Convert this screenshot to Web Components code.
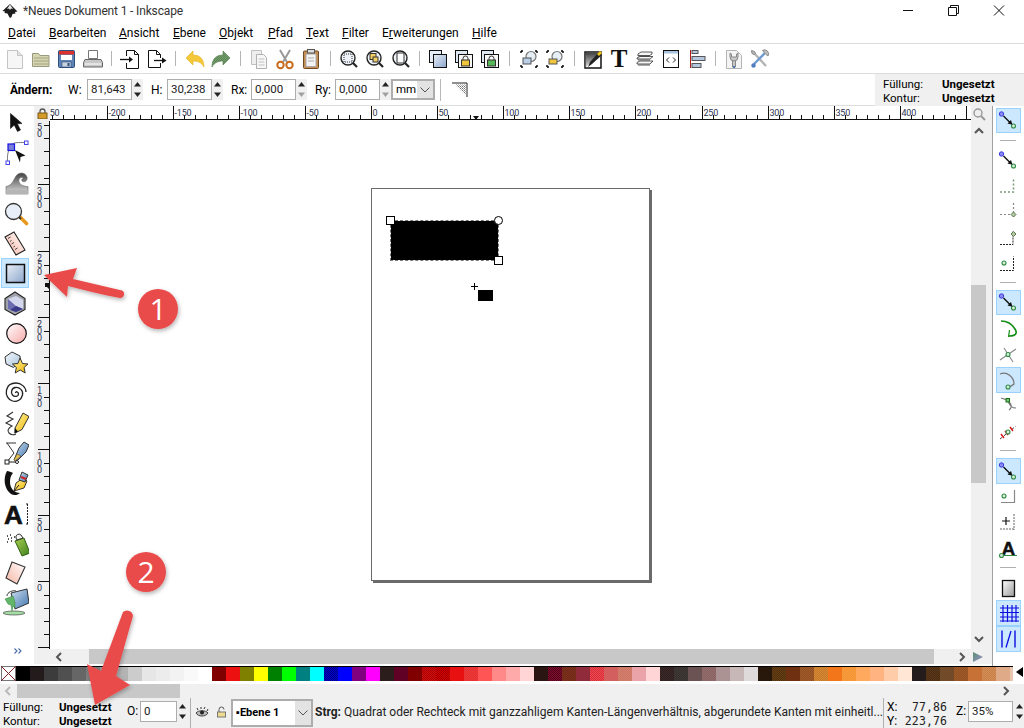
<!DOCTYPE html>
<html lang="de"><head><meta charset="utf-8"><title>Inkscape</title>
<style>html,body{margin:0;padding:0;background:#fff}</style></head>
<body>
<ink-app>
  <ink-titlebar slot="title">*Neues Dokument 1 - Inkscape</ink-titlebar>
  <ink-menubar slot="menu"></ink-menubar>
  <ink-commandbar slot="commands"></ink-commandbar>
  <ink-controlbar slot="controls"></ink-controlbar>
  <ink-workspace slot="work"></ink-workspace>
  <ink-palette slot="palette"></ink-palette>
  <ink-palettescroll slot="pscroll"></ink-palettescroll>
  <ink-statusbar slot="status"></ink-statusbar>
  <ink-annotations slot="notes"></ink-annotations>
</ink-app>
<script>
const FONT='Roboto,"Noto Sans",sans-serif';
const DEFS=`<defs>
<linearGradient id="gb" x1="0" y1="0" x2="1" y2="1"><stop offset="0" stop-color="#eaeff5"/><stop offset="1" stop-color="#8ba6cd"/></linearGradient>
<linearGradient id="gr" x1="0" y1="0" x2="1" y2="1"><stop offset="0" stop-color="#fff"/><stop offset="1" stop-color="#f7a8a8"/></linearGradient>
<linearGradient id="gp" x1="1" y1="0" x2="0" y2="1"><stop offset="0" stop-color="#fff"/><stop offset="1" stop-color="#f6b5a4"/></linearGradient>
<linearGradient id="gy" x1="0" y1="0" x2="1" y2="1"><stop offset="0" stop-color="#fff3a0"/><stop offset="1" stop-color="#eeb400"/></linearGradient>
<linearGradient id="gg" x1="0" y1="0" x2="0" y2="1"><stop offset="0" stop-color="#444"/><stop offset="1" stop-color="#ddd"/></linearGradient>
<linearGradient id="gw" x1="0" y1="0" x2="1" y2="1"><stop offset="0" stop-color="#fff"/><stop offset="1" stop-color="#999"/></linearGradient>
<linearGradient id="gl" x1="0" y1="0" x2="1" y2="1"><stop offset="0" stop-color="#f4f8fc"/><stop offset="1" stop-color="#a9c3dd"/></linearGradient>
<linearGradient id="gv" x1="0" y1="0" x2="1" y2="1"><stop offset="0" stop-color="#a7cf50"/><stop offset="1" stop-color="#3f7f1c"/></linearGradient>
<linearGradient id="gq" x1="0" y1="0" x2="1" y2="1"><stop offset="0" stop-color="#cfe0f0"/><stop offset="1" stop-color="#3f73ad"/></linearGradient>
<pattern id="dots" width="2" height="2" patternUnits="userSpaceOnUse"><rect width="1" height="1" fill="#444"/><rect x="1" y="1" width="1" height="1" fill="#444"/></pattern>
</defs>`;
const lens=(c='#eef3f9')=>`<circle cx="11" cy="11" r="7" fill="${c}" stroke="#222" stroke-width="1.4"/><path d="M16 16l4 4" stroke="#222" stroke-width="2.2"/>`;
const corners=`<path d="M4 4h2M4 4v2M20 4h-2M20 4v2M4 20h2M4 20v-2M20 20h-2M20 20v-2" stroke="#000" stroke-width="1.4" fill="none"/>`;
const lockI=(x,y,c)=>`<g transform="translate(${x} ${y})"><path d="M2 4V2.500a2.500 2.500 0 015 0V4" fill="none" stroke="#333"/><rect x=".5" y="4" width="8" height="6" fill="${c}" stroke="#333"/></g>`;
const CMD={
 new:`<path d="M4.500 3.500h10l5 5v13h-15z" fill="#f6f6f6" stroke="#c4c4c4"/><path d="M14.500 3.500v5h5" fill="#e2e2e2" stroke="#c4c4c4"/>`,
 open:`<path d="M3.500 6.500h6l1.500 2h9v11h-16.500z" fill="#d5d5b0" stroke="#9a9a80"/><path d="M5 11h15M5 14h15M5 17h15" stroke="#a4a484"/>`,
 save:`<rect x="3.500" y="3.500" width="16" height="17" rx="1" fill="#5f83b5" stroke="#2f4f7d"/><rect x="4" y="4" width="15" height="3.500" fill="#d9322e"/><rect x="6" y="8" width="11" height="5" fill="#fff"/><rect x="7" y="15" width="9" height="5" fill="#c9d3dd" stroke="#2f4f7d" stroke-width=".6"/><rect x="12.500" y="16" width="2" height="3" fill="#2f4f7d"/>`,
 print:`<path d="M7.500 3.500h9v8h-9z" fill="#fff" stroke="#777"/><path d="M4 12.500h16l1.500 3v4.500h-19v-4.500z" fill="#c8c8c8" stroke="#666"/><path d="M4 17h16" stroke="#fff"/>`,
 import:`<path d="M8.500 9V3.500h8l4 4v14h-12V16" fill="#fff" stroke="#111"/><path d="M16.500 3.500v4h4" fill="none" stroke="#111"/><path d="M2 12.500h10" stroke="#111" stroke-width="1.300"/><path d="M11 9.500l4 3-4 3z" fill="#111"/>`,
 export:`<path d="M16.500 11V7.500l-4-4h-8v17h12V16" fill="#fff" stroke="#111"/><path d="M12.500 3.500v4h4" fill="none" stroke="#111"/><path d="M10 13.500h9" stroke="#111" stroke-width="1.300"/><path d="M18 10.500l4.500 3-4.500 3z" fill="#111"/>`,
 undo:`<path d="M3 11l7-7v4c6 0 11 3 11 12-2-4-6-6-11-6v4z" fill="#f5c83a" stroke="#e4b020" stroke-width=".6"/>`,
 redo:`<path d="M21 11l-7-7v4c-6 0-11 3-11 12 2-4 6-6 11-6v4z" fill="#6fa066" stroke="#55804c" stroke-width=".6"/><path d="M21 11l-7-7v4c-6 0-11 3-11 12 2-4 6-6 11-6v4z" fill="url(#dots)" opacity=".3"/>`,
 dup:`<path d="M4.500 3.500h10v14h-10z" fill="#eee" stroke="#c0c0c0"/><path d="M9.500 7.500h7l3 3v11h-10z" fill="#f7f7f7" stroke="#b0b0b0"/><path d="M11.500 12h6M11.500 15h6M11.500 18h6" stroke="#c0c0c0"/>`,
 cut:`<path d="M7 3l7 12M17 3l-7 12" stroke="#9a9a9a" stroke-width="2"/><circle cx="7.500" cy="18" r="3.200" fill="none" stroke="#c76a1c" stroke-width="2"/><circle cx="16.500" cy="18" r="3.200" fill="none" stroke="#c76a1c" stroke-width="2"/>`,
 paste:`<rect x="4.500" y="4" width="15" height="17.500" rx="1" fill="#c68e52" stroke="#6d4a25"/><path d="M7 7h10v12.500h-10z" fill="#f4f4f4" stroke="#aaa"/><rect x="8.500" y="2.500" width="7" height="3.500" fill="#ddd" stroke="#555"/><path d="M9 11h6M9 14h6" stroke="#aaa"/>`,
 zsel:lens()+`<rect x="7" y="7" width="8" height="8" fill="none" stroke="#333" stroke-dasharray="1 1"/>`,
 zdraw:lens()+`<rect x="7" y="6.500" width="6" height="6" fill="#f1cf62" stroke="#333"/><rect x="10" y="10" width="5" height="5" fill="#f1cf62" stroke="#333"/>`,
 zpage:lens()+`<rect x="8" y="6" width="7" height="10" fill="#fff" stroke="#333"/>`,
 clone:`<rect x="3.500" y="3.500" width="12" height="12" fill="#e8eef6" stroke="#111"/><rect x="7.500" y="7.500" width="13" height="13" fill="url(#gb)" stroke="#111"/>`,
 lock:`<rect x="3.500" y="3.500" width="12" height="12" fill="#dfe8f2" stroke="#111"/><rect x="6.500" y="7.500" width="14" height="13" fill="#f7f7f7" stroke="#111"/>`+lockI(9,9,'#efc63c'),
 unlock:`<rect x="3.500" y="3.500" width="12" height="12" fill="#dfe8f2" stroke="#111"/><rect x="6.500" y="7.500" width="14" height="13" fill="#f7f7f7" stroke="#111"/>`+lockI(9,9,'#58b858'),
 zoomobj:corners+`<circle cx="14" cy="9.500" r="5" fill="#e6eef6" stroke="#777" stroke-width="1.200"/><rect x="6" y="11" width="8" height="6" fill="#b9cfe8" stroke="#555"/>`,
 zoomlock:corners+`<circle cx="14" cy="9.500" r="5" fill="#e6eef6" stroke="#777" stroke-width="1.200"/><rect x="6" y="12" width="8" height="5" fill="#efc63c" stroke="#555"/>`,
 fill:`<path d="M4 5h16v16H4z" fill="#fff" stroke="#111" stroke-width="1.500"/><path d="M4.800 20.500V6h14z" fill="url(#gg)"/><path d="M7 20l2-5L18 5l3 3-10 9z" fill="#222"/><path d="M16 7l3-3 2 2-3 3z" fill="#f5c518"/>`,
 xmled:`<rect x="4.500" y="3.500" width="15" height="17" fill="#fff" stroke="#111"/><rect x="5" y="4" width="14" height="2.500" fill="#a9c3dd"/><path d="M10 10.500L7.500 13l2.500 2.500M14 10.500l2.500 2.500-2.500 2.500" fill="none" stroke="#222"/>`,
 layers:`<path d="M5 7l3-2h11v2l-3 2H5zM4 11l3-1.500h13l-3 2.500H4zM4 15.500l3-1.500h13l-3 3H4z" fill="#f6f6f6" stroke="#333" stroke-width=".8"/><path d="M5 8.500h12M5 13h12M5 18h12" stroke="#555"/>`,
 align:`<path d="M5.500 3v18" stroke="#b41e1e"/><rect x="7" y="3.500" width="6" height="3" fill="#b3c8e0" stroke="#555"/><rect x="7" y="9.500" width="13" height="4" fill="#b3c8e0" stroke="#555"/><rect x="7" y="16.500" width="9" height="4" fill="#b3c8e0" stroke="#555"/>`,
 docprops:`<path d="M4.500 3.500h10l5 5v13h-15z" fill="#f4f4f4" stroke="#b4b4b4"/><path d="M8 6v4a4 4 0 008 0V6l-1.500 1v3h-5V7zM10.500 14v6h3v-6" fill="#c8c8c8" stroke="#888"/><path d="M11 19h2v2h-2z" fill="#4a78b8"/>`,
 prefs:`<path d="M6 6l12 13" stroke="#b4b4b4" stroke-width="2.400"/><path d="M18 5L6 17" stroke="#6f9bd0" stroke-width="2.400"/><circle cx="5.500" cy="18.500" r="2.200" fill="#4f7fc0"/><path d="M14.500 3.500a4 4 0 015.500 5.500l-2.500-2z" fill="#c0c0c0" stroke="#888"/><path d="M3.500 3.500l3 1 1 2-1.500 1-2-1z" fill="#bbb" stroke="#888"/>`
};
const TOOLS={
 select:`<path d="M9.500 4.500v15l3.800-3.500 3.200 6.500 3-1.500-3.200-6.200 4.700-.3z" fill="#111" stroke="#111" stroke-width=".6"/>`,
 node:`<path d="M10 6C13 3 18 3.500 24 3.500M9 10C6 13 6.500 19 6.500 23" fill="none" stroke="#777"/><rect x="7" y="5" width="6.500" height="6.500" fill="#7a7ed8" stroke="#1515e0" stroke-width="1.200"/><rect x="23.500" y="2" width="3.500" height="3.500" fill="#fff" stroke="#4545e6"/><rect x="5" y="22" width="3.500" height="3.500" fill="#fff" stroke="#4545e6"/><path d="M14 11l10.500 5.500-5 1.500-.5 5.500z" fill="#111"/>`,
 tweak:`<path d="M5 17.500C11 17 13 10 15 7c3-4 9-4 11 1 1 4-3 6-5 4-1-2 1-3 2-2-2-3-6-1-5 3 1 3 5 4.500 9 4.500v7.500H5z" fill="url(#gg)" stroke="#666" stroke-width=".6"/><path d="M5 21h22v4H5z" fill="#b5b5b5"/>`,
 zoom:`<path d="M19 18l6.500 6.500" stroke="#e89a20" stroke-width="3.600" stroke-linecap="round"/><circle cx="12.500" cy="12.500" r="8" fill="#e8eff8" stroke="#333" stroke-width="1.300"/><path d="M18 18l2 2" stroke="#333" stroke-width="2"/>`,
 measure:`<path d="M4 8l9-5 11 18-9 5z" fill="url(#gp)" stroke="#222" stroke-width="1.100"/><path d="M7 9.500l2.500-1.500M9 12.500l1.500-1M10.500 15l2.500-1.500M12.500 18l1.500-1M14 20.500l2.500-1.500" stroke="#444"/>`,
 rect:`<rect x="5.500" y="5.500" width="18" height="18" fill="url(#gb)" stroke="#111" stroke-width="1.500"/>`,
 box3d:`<path d="M14 3l10 6.500v11L14 26 4 20.500v-11z" fill="#a0a4aa" stroke="#222" stroke-width="1.100"/><path d="M7 10l8-3 7 4v9l-7 3-8-3z" fill="#d4d8ec"/><path d="M7 20V10l8 7 7 3-7 3z" fill="#6c6cb0"/><path d="M15 17l7 3-7 3-6-2z" fill="#3a3a86"/>`,
 circle:`<circle cx="15.500" cy="14.500" r="9.800" fill="url(#gr)" stroke="#111" stroke-width="1.200"/>`,
 star:`<path d="M11 3l8 4 .5 5-7 6.500L5 15 4 8z" fill="url(#gl)" stroke="#333"/><path d="M19 9l2.500 5.500 5.500.5-4 3.500 1.200 5.500-5-3-5 3 1.200-5.500-4-3.500 5.500-.5z" fill="url(#gy)" stroke="#333"/>`,
 spiral:`<path d="M14.500 14c0-2 3-1.500 3 1s-4 3.500-6 1-1-7 3-7.500 8 3 7 7.500-5.500 7.500-10 6-7-6-6-11S10 4 15 4s10 4 10 9" fill="none" stroke="#222" stroke-width="1.300"/>`,
 pencil:`<path d="M12 3L6 7l6 3-7 4 6 3c-4 2-5 5-3 7s5 2 7 1" fill="none" stroke="#333" stroke-width="1.100"/><path d="M14 19l8-15 6 3.500-7 13-7 3.500z" fill="url(#gy)" stroke="#333"/><path d="M14 19l3 3.500-3.500 2z" fill="#111"/>`,
 pen:`<path d="M5 4h10M6 4l7 10-7 9" fill="none" stroke="#333"/><rect x="4" y="21" width="4" height="4" fill="#fff" stroke="#222"/><path d="M8 23h7" stroke="#222"/><circle cx="16" cy="23" r="1.500" fill="#fff" stroke="#222"/><path d="M13 21l5-12 5-6 5 3-3 7-8 8z" fill="url(#gq)" stroke="#333"/><path d="M13 21l3-6 4 2-6 5z" fill="#eac14b" stroke="#333" stroke-width=".5"/>`,
 calli:`<path d="M6 2C2 9 3 20 10 25c3 2 7 1 9-1-5 0-10-4-10-11 0-4 1-7 3-9-2-1-4-2-6-2z" fill="#111"/><path d="M13 22l2-8 7-5 4 3-3 7z" fill="url(#gy)" stroke="#333"/><path d="M18 11l3-8 6 3-3 7z" fill="url(#gq)" stroke="#333"/><path d="M20 8l5 2" stroke="#c22" stroke-width="2"/><path d="M13 22l5-6" stroke="#222"/>`,
 text:`<text x="3" y="25" font-family="Liberation Sans" font-weight="700" font-size="26" fill="#111" stroke="#111" stroke-width=".6">A</text><path d="M25 5h3M26.500 5v20M25 25h3" stroke="#222" stroke-dasharray="2 1"/>`,
 spray:`<path d="M6 7h1M9 6h1M7 10h1M10 9h1M6 13h1M10 12h1M13 8h1" stroke="#222" stroke-width="1.500"/><path d="M14 12l9-3 6 15-8 3z" fill="url(#gv)" stroke="#2f5f12"/><path d="M15 9a3 3 0 015-3l2 3-6 2z" fill="#f5f5f5" stroke="#333"/>`,
 eraser:`<path d="M11 3l13 5-8 17-11-6z" fill="url(#gp)" stroke="#333" stroke-width="1.100"/>`,
 bucket:`<ellipse cx="13" cy="25" rx="11" ry="2" fill="#a4dca4" stroke="#333" stroke-width=".6"/><path d="M6 8c0-4 6-6 9-5" fill="none" stroke="#333"/><path d="M10 5l16-4 2 14-14 6z" fill="url(#gq)" stroke="#333"/><path d="M4 11l8-3 2 6v6l-2-2-1 5-1-6-3-1z" fill="#63b56a" stroke="#2f7f3a" stroke-width=".5"/>`
};
const sn={b:(x,y)=>`<circle cx="${x}" cy="${y}" r="2.200" fill="#8a8af0" stroke="#3a3ae0"/>`,g:(x,y)=>`<circle cx="${x}" cy="${y}" r="2" fill="#d8ecd8" stroke="#2e8b45" stroke-width="1.100"/>`,d:(x,y)=>`<path d="M${x} ${y-2.500}l2.500 2.500-2.500 2.500-2.500-2.500z" fill="#b4c8a4" stroke="#5b7a4b"/>`};
const snapMain=sn.b(4.500,5)+sn.g(16.500,17)+`<path d="M6.500 7l7 7" stroke="#111" stroke-width="1.400"/><path d="M15.500 15.800l-5-1.300 3.500-3.500z" fill="#111"/>`;
const green=`stroke="#7a9b7a" stroke-dasharray="2 2" fill="none"`;
const SNAP={
 main:snapMain,
 bbox:`<path d="M3 17h13.500V4" ${green} stroke-width="1.500"/>`,
 bedge:`<path d="M3 14.500h14" stroke-dasharray="2 2" stroke="#888" stroke-width="1.200"/><path d="M16.500 3v16" stroke-dasharray="2 2" stroke="#888" stroke-width="1.200"/>`+sn.d(16.500,14.500),
 bcorner:`<path d="M3 18.500h13v-14" stroke="#222" stroke-dasharray="2 1" fill="none"/>`+sn.d(16.500,8),
 bmid:`<path d="M3 18.500h13.500v-14" stroke="#222" stroke-dasharray="2 1" fill="none"/>`+sn.g(7,11),
 path:`<path d="M4 4c6 0 11 3 14 8s0 7-6 7" fill="none" stroke="#158c15" stroke-width="1.600"/><path d="M11.500 20l1-7" stroke="#158c15" stroke-width="1.200"/>`,
 inter:`<path d="M3 17L19 6M7 5l9 14" stroke="#888" stroke-width="1.100"/>`+sn.g(11,11.500),
 cusp:`<path d="M3 5c7-3 14 3 14 10-3 3-7 3-7 5" fill="none" stroke="#777" stroke-width="1.300"/>`+sn.g(11,18),
 smooth:`<path d="M4 4l6 2c3 4 3 8 9 8M12 8c3 2 3 6 0 8" fill="none" stroke="#777" stroke-width="1.100"/><rect x="9" y="4.500" width="3.500" height="3.500" fill="#7bbf7b" stroke="#157515"/>`,
 centerl:`<path d="M3 19L19 6" stroke="#444" stroke-dasharray="3 2"/><path d="M4 14l3 4M8 11l3 4M13 7l3 4" stroke="#d11" stroke-width="1.400"/>`+sn.g(11,12),
 center:`<path d="M4 17.500h13.500V5" fill="none" stroke="#888" stroke-width="1.200"/>`+sn.g(7,11),
 mid:`<path d="M5 10h8M9 6v8" stroke="#111" stroke-width="1.200"/><path d="M17 3v16M3 18h14" stroke="#666" stroke-dasharray="2 1"/>`,
 txt:`<text x="4.500" y="18" font-family="Liberation Sans" font-weight="700" font-size="19" fill="#111" stroke="#111" stroke-width=".4">A</text><path d="M3 18.500h17" stroke="#2e8b45"/>`+sn.g(4.500,18.500),
 page:`<rect x="5.500" y="3.500" width="12" height="16" fill="url(#gw)" stroke="#111" stroke-width="1.300"/>`,
 grid:`<path d="M6 3v17M10.500 3v17M15 3v17M19 3v17M3 6h19M3 10.500h19M3 15h19M3 19h19" stroke="#0d0de0" stroke-width="1.200"/>`,
 guide:`<path d="M5 2.500v17M18 2.500v17" stroke="#0d0de0" stroke-width="1.400"/><path d="M9 19.500L14 3" stroke="#0d0de0" stroke-width="1.300"/>`
};
function def(name,css,html,init){
  const tpl=document.createElement('template');
  tpl.innerHTML=`<style>${css}</style>${html}`;
  customElements.define(name,class extends HTMLElement{
    constructor(){super();this.attachShadow({mode:'open'}).appendChild(tpl.content.cloneNode(true));}
    connectedCallback(){if(init&&!this._d){this._d=1;init(this,this.shadowRoot);}}
  });
}
const svgIcon=(body,box,size)=>`<svg width="${size}" height="${size}" viewBox="0 0 ${box} ${box}">${DEFS}${body}</svg>`;
def('ink-app',`:host{display:grid;position:relative;width:1024px;height:728px;overflow:hidden;background:#fff;grid-template-rows:22px 22px 30px 32px 560px 18px 14px 30px;font:12px ${FONT};color:#000}`,
 `<slot name="title"></slot><slot name="menu"></slot><slot name="commands"></slot><slot name="controls"></slot><slot name="work"></slot><slot name="palette"></slot><slot name="pscroll"></slot><slot name="status"></slot><slot name="notes"></slot>`);
def('ink-titlebar',`:host{display:flex;align-items:center;background:#fff;padding-left:2px;font-size:12px;letter-spacing:-.15px;height:22px;color:#333}
 .t{margin-left:5px;flex:1}.w{display:flex;align-items:center}.w svg{display:block}`,
 `<svg width="16" height="16" viewBox="0 0 16 16"><path d="M8 1L.5 8l2.500.5-.5 1.500 3 .5L7 13.500l1 1.500 1.500-1 1-3 3-.5-.5-1.500 2.500-.5z" fill="#1d1d1d"/><path d="M8 1.500L5 6l2-.5 1 1.500 1-1.500 2 .5z" fill="#fff" opacity=".9"/></svg><span class="t"><slot></slot></span>
 <span class="w"><svg width="46" height="20" viewBox="0 0 46 20"><path d="M17 9.500h10" stroke="#111"/></svg><svg width="46" height="20" viewBox="0 0 46 20"><path d="M16.500 6.500h8v8h-8zM18.500 6.500v-2h8v8h-2" fill="none" stroke="#111"/></svg><svg width="46" height="20" viewBox="0 0 46 20"><path d="M16 4.500l10 10M26 4.500l-10 10" stroke="#111"/></svg></span>`);
def('ink-menuitem',`:host{display:block}`,`<slot></slot>`);
def('ink-menubar',`:host{display:flex;align-items:center;height:21px;border-bottom:1px solid #dcdcdc;padding-left:8px;font-size:12px;background:#fff}`,`<slot></slot>`,(el)=>{
 [['D','atei',41],['B','earbeiten',70],['A','nsicht',54],['E','bene',46],['O','bjekt',49],['P','fad',38],['T','ext',36],['F','ilter',40],['Er','weiterungen',90],['H','ilfe',40]].forEach(([a,b,w])=>{
  const m=document.createElement('ink-menuitem');m.style.width=w+'px';
  if(a==='Er'){m.innerHTML='E<u>r</u>'+b;}else{m.innerHTML='<u>'+a+'</u>'+b;}
  el.appendChild(m);});
});
def('ink-cmd',`:host{display:flex;width:26px;height:29px;align-items:center;justify-content:center}svg{display:block}`,`<span id="s"></span>`,(el,sr)=>{sr.getElementById('s').innerHTML=svgIcon(CMD[el.getAttribute('icon')],24,24);});
def('ink-vsep',`:host{display:block;width:1px;height:15px;background:#b4b4b4;align-self:center;margin:0 var(--m,5px)}`,``);
def('ink-commandbar',`:host{display:flex;align-items:center;height:29px;border-bottom:1px solid #dcdcdc;padding-left:2px;background:#fff}`,`<slot></slot>`,(el)=>{
 const add=(l)=>l.forEach(n=>{const c=document.createElement('ink-cmd');c.setAttribute('icon',n);el.appendChild(c);});
 const groups=[['new','open','save','print'],['import','export'],['undo','redo'],['dup','cut','paste'],['zsel','zdraw','zpage'],['clone','lock','unlock'],['zoomobj','zoomlock'],['fill','T','layers','xmled','align'],['docprops','prefs']];
 const ms=[5,6,5.5,5.5,5,6,5.5,5];
 groups.forEach((g,i)=>{g.forEach(n=>{if(n==='T'){const t=document.createElement('ink-cmdtext');t.textContent='T';el.appendChild(t);}else add([n]);});
  if(i<groups.length-1){const s=document.createElement('ink-vsep');s.style.setProperty('--m',ms[i]+'px');el.appendChild(s);}});
});
def('ink-cmdtext',`:host{display:flex;width:26px;height:29px;align-items:center;justify-content:center;font:700 25px "Liberation Serif",serif;color:#111}`,`<slot></slot>`);
def('ink-spin',`:host{display:flex;height:21px;flex:none}.i{box-sizing:border-box;width:var(--w,45px);height:21px;border:1px solid #adadad;background:#fff;padding-left:3px;line-height:19px;font-size:11.500px;color:#222}
 .b{width:11px;height:21px;display:grid;grid-template-rows:1fr 1fr;background:#f0f0f0;margin-left:var(--g,0)}.b svg{display:block;margin:auto}`,
 `<div class="i"><slot></slot></div><div class="b"><svg width="7" height="5" viewBox="0 0 7 5"><path d="M0 4.500L3.500 0 7 4.500z" fill="#222"/></svg><svg width="7" height="5" viewBox="0 0 7 5"><path id="d" d="M0 .5L3.500 5 7 .5z" fill="#222"/></svg></div>`,
 (el,sr)=>{if(el.hasAttribute('dim'))sr.getElementById('d').setAttribute('fill','#a0a0a0');});
def('ink-combo',`:host{display:flex;box-sizing:border-box;height:var(--h,21px);width:var(--w,44px);border:2px solid #adadad;background:#fff;flex:none}
 .v{flex:1;padding-left:3px;line-height:var(--lh,17px);font-size:var(--fs,11.500px);font-weight:var(--fw,400);white-space:nowrap;overflow:hidden}
 .a{width:16px;background:#e3e3e3;display:flex;align-items:center;justify-content:center}`,
 `<div class="v"><slot></slot></div><div class="a"><svg width="10" height="6" viewBox="0 0 10 6"><path d="M.5.500L5 5 9.500.5" fill="none" stroke="#555"/></svg></div>`);
def('ink-styleinfo',`:host{display:grid;grid-template-columns:var(--c,59px) auto;line-height:var(--l,13.500px);font-size:11.500px}b{font-weight:700}`,
 `<span>Füllung:</span><b>Ungesetzt</b><span>Kontur:</span><b>Ungesetzt</b>`);
def('ink-controlbar',`:host{display:flex;align-items:center;height:32px;background:#fff;font-size:12px}
 .row{display:flex;align-items:center;flex:1;height:31px;padding-left:10px}
 b{width:58px}span{flex:none}
 .info{box-sizing:border-box;width:149px;height:32px;background:#f0f0f0;padding:4px 0 0 8px}
 .wrap{flex:1;display:flex;flex-direction:column;height:32px}.g{height:1px;background:#dedede}
 .sep{width:1px;height:22px;background:#b8b8b8;margin:0 11px 0 5px}`,
 `<div class="wrap"><div class="row"><b>Ändern:</b><span style="width:19px">W:</span><ink-spin>81,643</ink-spin><span style="margin-left:8px;width:16px">H:</span><ink-spin>30,238</ink-spin><span style="margin-left:8px;width:20px">Rx:</span><ink-spin dim>0,000</ink-spin><span style="margin-left:8px;width:20px">Ry:</span><ink-spin dim>0,000</ink-spin><ink-combo>mm</ink-combo><div class="sep"></div><svg width="16" height="16" viewBox="0 0 16 16"><path d="M0 1h15v14" fill="none" stroke="#222"/><path d="M3 2.500h11v11z" fill="url(#c)"/><defs><pattern id="c" width="2" height="2" patternUnits="userSpaceOnUse"><rect width="1" height="1" fill="#777"/><rect x="1" y="1" width="1" height="1" fill="#aaa"/></pattern></defs></svg></div><div class="g"></div></div><div class="info"><ink-styleinfo></ink-styleinfo></div>`);
def('ink-tool',`:host{display:flex;flex:none;box-sizing:border-box;align-items:center;justify-content:center;width:var(--w,28px);height:var(--h,29.940px);margin-left:var(--ml,1px);border:1px solid transparent}
 :host([active]){background:#cce8ff;border-color:#99d1ff}svg{display:block}`,`<span id="s"></span>`,(el,sr)=>{
 const s=el.getAttribute('set')==='snap';sr.getElementById('s').innerHTML=svgIcon((s?SNAP:TOOLS)[el.getAttribute('icon')],s?22:28,s?22:28);});
def('ink-toolbox',`:host{display:flex;flex-direction:column;background:#fff;width:34px;height:560px;position:relative;padding-top:2.500px;box-sizing:border-box}
 .more{margin:auto 0 12px 14px;height:6px;display:block}`,`<slot></slot><svg class="more" width="9" height="6" viewBox="0 0 9 6"><path d="M.5.500L3 3 .5 5.500M4.500.5L7 3 4.500 5.500" fill="none" stroke="#4a6ea9" stroke-width="1.100"/></svg>`,(el)=>{
 ['select','node','tweak','zoom','measure','rect','box3d','circle','star','spiral','pencil','pen','calli','text','spray','eraser','bucket'].forEach(n=>{
  const t=document.createElement('ink-tool');t.setAttribute('icon',n);if(n==='rect')t.setAttribute('active','');el.appendChild(t);});
});
def('ink-hruler',`:host{display:block;height:15px;overflow:hidden;background:#fff}svg{display:block}`,`<svg id="r" width="921" height="15" viewBox="50 106 921 15"></svg>`,(el,sr)=>{
 let s='';for(let i=-5;i<=9;i++){const x=371+i*66.1,X=Math.round(x)+.5;
  s+=`<path d="M${X} 106v14" stroke="#111"/>`;
  for(let j=1;j<6;j++){const t=Math.round(x+j*11)+.5;s+=`<path d="M${t} 115v5" stroke="#111"/>`;}
  if(i<9)s+=`<text x="${X+1}" y="116" font-family="Roboto,sans-serif" font-size="9" letter-spacing="-.2" fill="#2c3350">${i*50}</text>`;}
 s+=`<path d="M50 119.500h921" stroke="#111"/><path d="M473 116l3 4 3-4z" fill="#111"/>`;
 sr.getElementById('r').innerHTML=s;});
def('ink-vruler',`:host{display:block;width:16px;overflow:hidden;background:#f0f0f0}svg{display:block}`,`<svg id="r" width="16" height="528" viewBox="34 121 16 528"></svg>`,(el,sr)=>{
 let s='';for(let i=-1;i<=6;i++){const y=Math.round(581-i*66.1)+.5;
  s+=`<path d="M38 ${y}h11" stroke="#111"/>`;
  for(let j=1;j<5;j++){s+=`<path d="M44 ${Math.round(y+j*13.2)+.5}h5" stroke="#111"/>`;}
  if(i>=0)String(i*50).split('').forEach((d,k)=>{s+=`<text x="37" y="${y+9+k*7}" font-family="Roboto,sans-serif" font-size="9" fill="#2c3350">${d}</text>`;});}
 s+=`<path d="M44 125.500h5M44 138.500h5M44 151.500h5M44 165.500h5M44 178.500h5" stroke="#111"/><text x="37" y="130" font-family="Roboto,sans-serif" font-size="9" fill="#2c3350">5</text><text x="37" y="137" font-family="Roboto,sans-serif" font-size="9" fill="#2c3350">0</text><path d="M49.500 121v528" stroke="#111"/><path d="M45 283h4v6l-2-2h-2z" fill="#111"/>`;
 sr.getElementById('r').innerHTML=s;});
def('ink-canvas',`:host{display:block;position:relative;background:#fff;overflow:hidden;width:921px;height:528px}
 .page{position:absolute;left:321px;top:67px;width:277px;height:391px;background:#fff;border:1px solid #6b6b6b;box-shadow:2px 2px 0 #6b6b6b}
 .sel{position:absolute;left:341px;top:100px;width:107px;height:39px;background:#000;outline:1px dashed #777}
 .h{position:absolute;width:7px;height:7px;background:#fff;border:1px solid #000}.c{border-radius:50%}
 .cur{position:absolute;left:428px;top:169px;width:15px;height:11px;background:#000}
 .plus{position:absolute;left:421px;top:162px}`,
 `<div class="page"></div><div class="sel"></div><div class="h" style="left:336px;top:95px"></div><div class="h c" style="left:444px;top:95px"></div><div class="h" style="left:444px;top:135px"></div><svg class="plus" width="7" height="7" viewBox="0 0 7 7"><path d="M3.500 0v7M0 3.500h7" stroke="#000"/></svg><div class="cur"></div>`);
const chev=(d,c='#555')=>{const p={l:'M7 1L3 5l4 4',r:'M3 1l4 4-4 4',u:'M1 7l4-4 4 4',d:'M1 3l4 4 4-4'}[d];return `<svg width="10" height="10" viewBox="0 0 10 10"><path d="${p}" fill="none" stroke="${c}" stroke-width="2"/></svg>`;};
def('ink-workspace',`:host{display:grid;grid-template-columns:34px 16px 921px 21px 32px;grid-template-rows:15px 528px 15px 2px;height:560px;background:#fff}
 .corner{background:#f0f0f0;display:flex;align-items:center;justify-content:center}
 ink-toolbox{grid-row:1/5;grid-column:1}ink-hruler{grid-row:1;grid-column:3}ink-vruler{grid-row:2;grid-column:2}ink-canvas{grid-row:2;grid-column:3}
 .vs{grid-row:1/3;grid-column:4;background:#f0f0f0;position:relative;display:flex;flex-direction:column;align-items:center;width:21px}
 .vs .wrap{width:15px;display:flex;flex-direction:column;align-items:center;margin-right:6px;height:100%}
 .vs .mag{height:15px;display:flex;align-items:center}.vs .a{height:15px;margin-top:2px;display:flex;align-items:center}
 .vs .th{width:15px;background:#c8c8c8;height:198px;flex:none;margin-top:147px}.vs .e{margin-top:auto;height:20px}
 .hs{grid-row:3;grid-column:2/5;background:#f0f0f0;display:flex;align-items:center;height:15px}
 .hs .th{width:845px;height:15px;background:#c8c8c8;margin-left:25px}
 .pan{grid-row:1/5;grid-column:5;border-left:1px solid #a0a0a0;background:#fff;display:flex;flex-direction:column;padding-top:1.500px;box-sizing:border-box;--w:25px;--h:25.750px;--ml:2.500px}
 .s{height:1px;background:#b0b0b0;width:16px;margin:6.400px 0 6.400px 7px;flex:none}
 .l{margin-left:20px;display:flex}`,
 `<ink-toolbox></ink-toolbox><div class="corner" style="grid-row:1;grid-column:2"><svg width="11" height="11" viewBox="0 0 11 11"><path d="M3 5V3.500a2.500 2.500 0 015 0V5" fill="none" stroke="#555" stroke-width="1.300"/><rect x="1" y="5" width="9" height="6" fill="#d49a2a" stroke="#7a5a1a"/></svg></div><ink-hruler></ink-hruler><ink-vruler></ink-vruler><ink-canvas></ink-canvas>
 <div class="vs"><div class="wrap"><div class="mag"><svg width="14" height="14" viewBox="0 0 14 14"><circle cx="6" cy="6" r="4" fill="#eee" stroke="#999" stroke-width="1.400"/><path d="M9 9l4 4" stroke="#999" stroke-width="2"/></svg></div><div class="a">${chev('u')}</div><div class="th"></div><div class="a e">${chev('d')}</div></div></div>
 <div class="hs"><span class="l">${chev('l')}</span><div class="th"></div><span style="margin-left:23px;display:flex">${chev('r')}</span><svg style="margin-left:5px" width="12" height="12" viewBox="0 0 12 12"><path d="M1 1l10 5-10 5z" fill="url(#cm)"/><defs><linearGradient id="cm" x1="0" y1="0" x2="1" y2="1"><stop offset="0" stop-color="#5a8f70"/><stop offset=".6" stop-color="#8090a8"/><stop offset="1" stop-color="#b08080"/></linearGradient></defs></svg></div>
 <div class="pan" id="p"></div>`,(el,sr)=>{
  const p=sr.getElementById('p');
  [['main',1],0,['main'],['bbox'],['bedge'],['bcorner'],['bmid'],0,['main',1],['path'],['inter'],['cusp',1],['smooth'],['centerl'],0,['main',1],['center'],['mid'],['txt'],0,['page'],['grid',1],['guide',1]].forEach(it=>{
   if(!it){const s=document.createElement('div');s.className='s';p.appendChild(s);return;}
   const t=document.createElement('ink-tool');t.setAttribute('set','snap');t.setAttribute('icon',it[0]);if(it[1])t.setAttribute('active','');p.appendChild(t);});
 });
const PAL=['#000','#241c1c','#3c3c3c','#505050','#666','d#888|#777','#999','#b3b3b3','#ccc','#e6e6e6','#ececec','#f2f2f2','#f9f9f9','#fff','#800000','#ed1010','#808000','#ff0','#008000','#0f0','#008080','#0ff','d#000080|#0000d0','#00f','#800080','#f0f','#2b1d1b','#5f0024','#800000','d#aa0000|#d01010','d#d40000|#a00000','#e81010','d#f02828|#e04040','#ff5555','#ff8888','#ffaaaa','#ffd5d5','#2b1512','d#500018|#801030','d#6c2b1a|#803018','#8f2b3a','d#d42d3a|#f04a50','#d35f5f','d#c87563|#d88070','#e9a3a9','#ffd5d5','d#2b2020|#402828','d#413a34|#353030','#6c5353','d#916f6f|#8a6060','#ac9393','#c8b7b7','d#e3dbdb|#dadada','#28170b','d#6c4010|#4a3010','#6e3010','d#a05a2c|#905020','d#d38d2f|#c87530','#f4761a','d#f9a030|#f09040','#ffa95f','#ffb380','#ffccaa','#ffe6d5','#241c1c','d#5a3a1a|#4a2a10','d#7a4a20|#6a4a30','d#a05a2c|#905020','#c87137','d#d38d5f|#c88040','#deaa87','#e9c6af'];
def('ink-palette',`:host{display:flex;height:18px;align-items:flex-start;background:#fff;position:relative}
 .x{width:15px;height:15px;flex:none;margin-left:1px}
 .r{display:flex;width:997px;overflow:hidden;height:15px;border-top:1px solid #000;box-sizing:border-box;flex:none}
 .s{width:14px;height:14px;flex:none}.t{margin:1px 0 0 3px}`,
 `<svg class="x" viewBox="0 0 15 15"><rect x=".5" y=".5" width="14" height="14" fill="#fff" stroke="#555" stroke-width=".8"/><path d="M0 0l15 15M15 0L0 15" stroke="#802020"/></svg><div class="r" id="r"></div><svg class="t" width="7" height="10" viewBox="0 0 7 10"><path d="M7 0L0 5l7 5z" fill="#000"/></svg>`,(el,sr)=>{
  const r=sr.getElementById('r');PAL.forEach(c=>{const d=document.createElement('div');d.className='s';
   if(c[0]==='d'){const [a,b]=c.slice(1).split('|');d.style.background=`repeating-conic-gradient(${a} 0 25%,${b} 0 50%) 0 0/2px 2px`;}else d.style.background=c;r.appendChild(d);});
 });
def('ink-palettescroll',`:host{display:flex;align-items:center;height:14px;background:#f0f0f0}.th{width:163px;height:14px;background:#c8c8c8;margin-left:4px}.sp{flex:1}span{display:flex}`,
 `<span style="margin-left:3px">${chev('l','#bbb')}</span><div class="th"></div><div class="sp"></div><span style="margin-right:13px">${chev('r','#555')}</span>`);
def('ink-statusbar',`:host{display:flex;align-items:flex-start;height:30px;background:#f0f0f0;font-size:12px;overflow:hidden}
 ink-styleinfo{margin:2px 0 0 3px;width:124px;--c:56px;--l:14px;flex:none}.o{margin:6px 0 0 0;width:13px;flex:none}ink-spin{margin-top:3px;--w:37px}
 .sep{width:1px;height:30px;background:#b0b0b0;flex:none}.ico{display:flex;align-items:center;justify-content:center;height:24px;flex:none;margin-top:2px}
 ink-combo{--w:82px;--h:28px;--lh:24px;--fw:700;--fs:11px;margin:1px 2px 0 1px}
 .msg{width:568px;flex:none;white-space:nowrap;overflow:hidden;margin-top:6px;line-height:16px;color:#222;font-size:12px}
 .xy{width:60px;display:grid;grid-template-columns:14px 1fr;margin-left:3px;line-height:14px;margin-top:2px;flex:none}.xy i{font:11.500px/14px "DejaVu Sans Mono",monospace;text-align:right;letter-spacing:.1px;color:#222}
 .z{margin:6px 0 0 9px;width:12px;flex:none}ink-spin.zz{--w:45px;--g:1px;margin:3px 0 0 0}`,
 `<ink-styleinfo></ink-styleinfo><span class="o">O:</span><ink-spin>0</ink-spin><div class="sep" style="margin-left:2px"></div>
 <div class="ico" style="width:22px"><svg width="14" height="12" viewBox="0 0 14 12"><path d="M1 7c2-3 10-3 12 0-2 4-10 4-12 0z" fill="#bbb" stroke="#444"/><circle cx="7" cy="6.500" r="2" fill="#222"/><path d="M3 4l-1-2M6 3V1M9 3l1-2M12 5l1-2" stroke="#333"/></svg></div>
 <div class="ico" style="width:17px"><svg width="11" height="12" viewBox="0 0 11 12"><path d="M3 6V3.500a2.500 2.500 0 015 0" fill="none" stroke="#555"/><rect x="1.500" y="6" width="8" height="5" fill="#f0dc90" stroke="#777"/></svg></div>
 <ink-combo>▪Ebene 1</ink-combo><div class="msg"><b>Strg:</b> Quadrat oder Rechteck mit ganzzahligem Kanten-Längenverhältnis, abgerundete Kanten mit einheitl...</div><div class="sep"></div>
 <div class="xy"><span>X:</span><i>77,86</i><span>Y:</span><i>223,76</i></div><span class="z">Z:</span><ink-spin class="zz">35%</ink-spin>`);
def('ink-annotations',`:host{position:absolute;left:0;top:0;width:1024px;height:728px;pointer-events:none;display:block}svg{display:block}text{font:400 30px "Open Sans","Noto Sans",sans-serif;fill:#fff}`,
 `<svg width="1024" height="728" viewBox="0 0 1024 728"><defs><filter id="sh" x="-20%" y="-20%" width="140%" height="140%"><feDropShadow dx="1" dy="2" stdDeviation="2" flood-color="#000" flood-opacity=".3"/></filter></defs>
 <g fill="#e94b4b" filter="url(#sh)"><path d="M44 275l33-7-4 11 49 11.500a4 4 0 01-2 7.500c-17-3-35-8-52-12l-1 11z"/><path d="M123 612a6 6 0 0110 4l-17 60 14 9-35 20-8-41 14 7z"/></g>
 <circle cx="158" cy="309" r="20" fill="#e94b4b" filter="url(#sh)"/><circle cx="146" cy="572" r="20" fill="#e94b4b" filter="url(#sh)"/>
 <text x="158" y="320" text-anchor="middle">1</text><text x="146" y="583" text-anchor="middle">2</text></svg>`);
</script>
</body></html>
